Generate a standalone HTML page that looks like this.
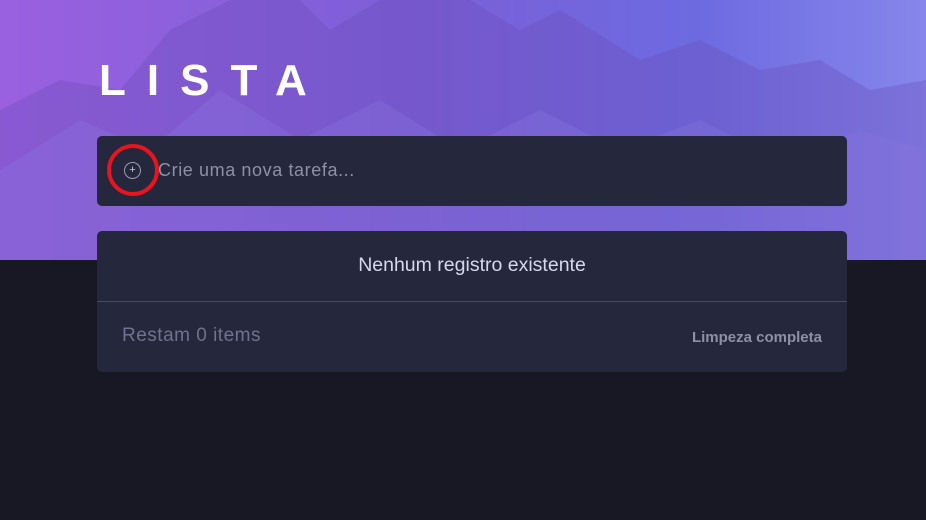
<!DOCTYPE html>
<html><head><meta charset="utf-8"><style>
body{margin:0;width:926px;height:520px;background:#181824;font-family:"Liberation Sans",sans-serif;position:relative;overflow:hidden}
.hero{position:absolute;left:0;top:0;width:926px;height:260px;background:linear-gradient(90deg,#9a60e0 0%,#7c5fd8 45%,#6d6ae0 75%,#8686ec 100%)}
.hero svg{position:absolute;left:0;top:0}
h1{position:absolute;left:99px;top:53px;margin:0;color:#fff;font-size:44px;font-weight:bold;letter-spacing:21px;line-height:56px}
.card{position:absolute;left:97px;background:#25273c;border-radius:5px;width:750px}
.in{top:136px;height:70px}
.in .c{position:absolute;left:27px;top:26px;width:17px;height:17px;border:1px solid #9a9cb4;border-radius:50%;box-sizing:border-box;color:#ccc;font-size:11px;line-height:15px;text-align:center}
.ring{position:absolute;left:107px;top:144px;width:52px;height:52px;border:4px solid #e8141e;border-radius:50%;box-sizing:border-box}
.in .t{position:absolute;left:61px;top:24px;color:#8e90a8;font-size:18px;letter-spacing:.6px}
.list{top:231px;height:141px}
.list .m{position:absolute;left:0;width:750px;top:23px;text-align:center;color:#d6d8ee;font-size:19.5px}
.list .hr{position:absolute;top:70px;left:0;width:750px;height:1px;background:#4a4c62}
.list .r{position:absolute;left:25px;top:94px;color:#6f7290;font-size:19px;letter-spacing:.5px}
.list .l{position:absolute;right:25px;top:98px;color:#8e90a8;font-size:15px;font-weight:bold}
</style></head><body>
<div class="hero"><svg width="926" height="260">
<polygon points="0,110 60,80 120,90 170,30 230,0 300,0 330,30 380,0 470,0 520,30 560,10 640,60 700,40 760,70 820,60 870,90 926,80 926,260 0,260" fill="#6a4cb8" opacity=".35"/>
<polygon points="0,170 80,120 150,150 220,90 300,140 380,100 460,150 540,110 620,150 700,120 780,160 860,130 926,150 926,260 0,260" fill="#8a74e0" opacity=".35"/>
</svg></div>
<h1>LISTA</h1>
<div class="card in"><div class="c">+</div><div class="t">Crie uma nova tarefa...</div></div>
<div class="ring"></div>
<div class="card list"><div class="m">Nenhum registro existente</div><div class="hr"></div><div class="r">Restam 0 items</div><div class="l">Limpeza completa</div></div>
</body></html>
